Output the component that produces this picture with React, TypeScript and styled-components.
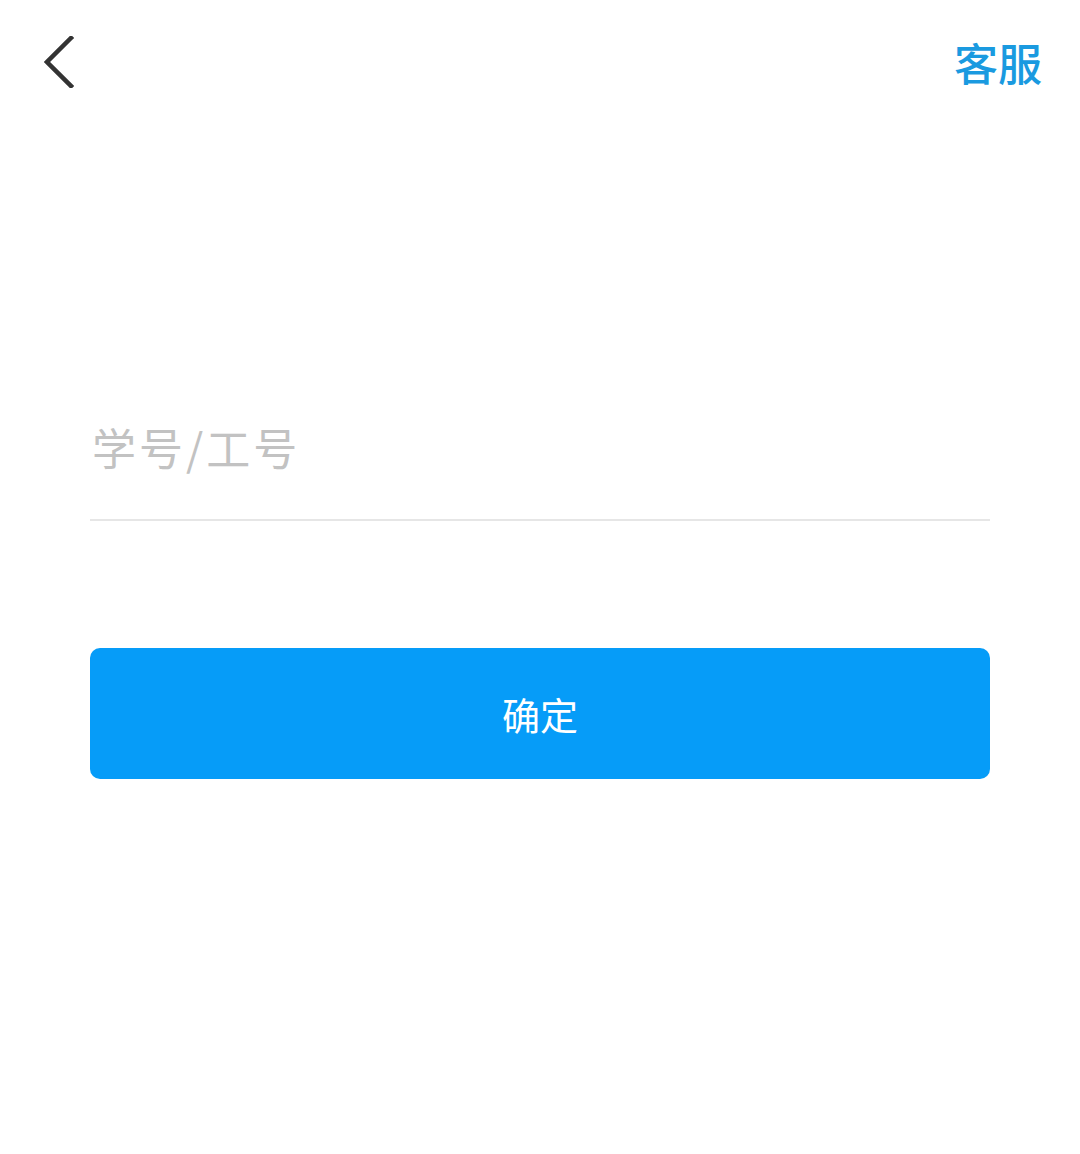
import React, { useState } from 'react';
import styled, { createGlobalStyle } from 'styled-components';

const GlobalStyle = createGlobalStyle`
  html, body {
    margin: 0;
    padding: 0;
    background: #ffffff;
  }
  body {
    font-family: "Noto Sans CJK SC", "Noto Sans", sans-serif;
  }
`;

export default function App() {
  const [account, setAccount] = useState('');

  return (
    <StyledPage>
      <GlobalStyle />
      <StyledHeader>
        <StyledBack type="button" aria-label="返回">
          <svg width="30" height="52" viewBox="0 0 30 52" fill="none">
            <path d="M27 2 L3 26 L27 50" stroke="#333333" strokeWidth="4.5" strokeLinecap="square" />
          </svg>
        </StyledBack>
        <StyledService>客服</StyledService>
      </StyledHeader>

      <StyledForm onSubmit={(e) => e.preventDefault()}>
        <StyledInput
          type="text"
          placeholder="学号/工号"
          value={account}
          onChange={(e) => setAccount(e.target.value)}
        />
        <StyledSubmit type="submit">确定</StyledSubmit>
      </StyledForm>
    </StyledPage>
  );
}

const StyledPage = styled.div`
  width: 1080px;
  height: 1154px;
  background: #ffffff;
  display: flex;
  flex-direction: column;
`;

const StyledHeader = styled.div`
  height: 124px;
  display: flex;
  align-items: center;
  justify-content: space-between;
  padding: 0 38px 0 44px;
`;

const StyledBack = styled.button`
  border: none;
  background: none;
  padding: 0;
  display: flex;
  cursor: pointer;
`;

const StyledService = styled.div`
  font-size: 44px;
  font-weight: 500;
  line-height: 1;
  color: #1a9ae0;
`;

const StyledForm = styled.form`
  display: flex;
  flex-direction: column;
  padding: 0 90px;
  margin-top: 251px;
`;

const StyledInput = styled.input`
  height: 146px;
  box-sizing: border-box;
  border: none;
  border-bottom: 2px solid #e6e6e6;
  outline: none;
  padding: 0 0 0 2px;
  font-family: "Noto Sans CJK SC", sans-serif;
  font-size: 44px;
  letter-spacing: 3px;
  color: #333333;
  background: transparent;

  &::placeholder {
    color: #c2c2c2;
  }
`;

const StyledSubmit = styled.button`
  margin-top: 127px;
  height: 131px;
  border: none;
  border-radius: 10px;
  background: #069cf8;
  color: #ffffff;
  font-family: "Noto Sans CJK SC", sans-serif;
  font-size: 38px;
  font-weight: 400;
  cursor: pointer;
`;
